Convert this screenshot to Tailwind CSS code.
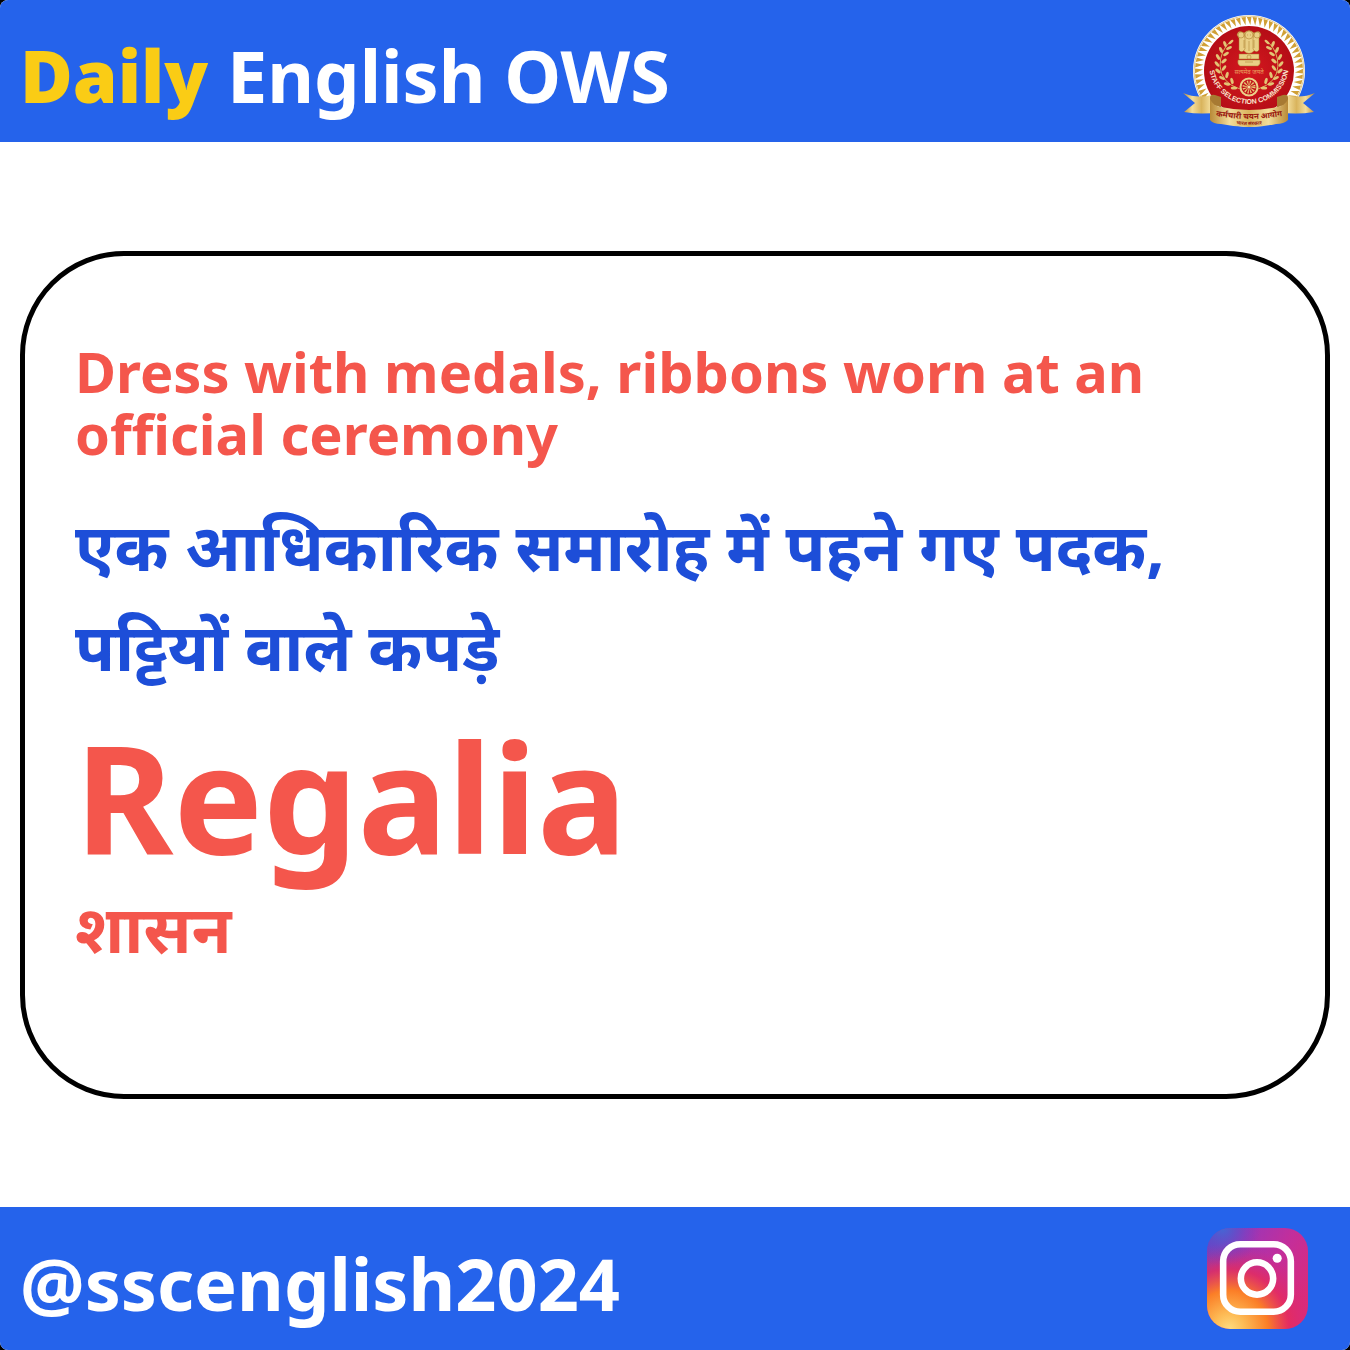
<!DOCTYPE html>
<html lang="en">
<head>
<meta charset="utf-8">
<meta name="viewport" content="width=device-width, initial-scale=1">
<title>Daily English OWS</title>
<script src="https://cdn.jsdelivr.net/npm/@tailwindcss/browser@4"></script>
</head>
<body class="bg-black font-['Noto_Sans',sans-serif] font-bold">
<div class="flex min-h-screen flex-col overflow-hidden rounded-lg bg-white">
<header class="flex h-[142px] items-center justify-between bg-[#2563eb] px-5 text-white">
  <h1 class="pt-2 text-[72px] leading-[96px]"><span class="font-black text-[#facc15]">Daily</span> English OWS</h1>
  <svg class="h-[142px] w-[160px] shrink-0" viewBox="0 0 160 142" role="img" aria-label="Staff Selection Commission">
    <defs>
      <linearGradient id="gold" x1="0" x2="1"><stop offset="0" stop-color="#b98a37"/><stop offset=".25" stop-color="#f3dd9b"/><stop offset=".5" stop-color="#d9b45d"/><stop offset=".75" stop-color="#f3dd9b"/><stop offset="1" stop-color="#b98a37"/></linearGradient>
      <radialGradient id="red"><stop offset="0" stop-color="#d5181f"/><stop offset="1" stop-color="#b50d16"/></radialGradient>
      <path id="ring" d="M39 60V64A40 40 0 0 0 119 64V60"/>
      <path id="motto" d="M41 115Q79 123 117 115"/>
      <path id="state" d="M48 121Q79 129 110 121"/>
      <g id="branch" fill="#e3c474">
        <path d="M70 89Q51 83 50 66Q50 51 60 42" fill="none" stroke="#d9b45d"/>
        <ellipse cx="61" cy="42" rx="3" ry="1.3" transform="rotate(-40 61 42)"/>
        <ellipse cx="55" cy="44" rx="3.2" ry="1.5" transform="rotate(70 55 44)"/><ellipse cx="59" cy="48" rx="3.2" ry="1.5" transform="rotate(-25 59 48)"/>
        <ellipse cx="51" cy="50" rx="3.2" ry="1.5" transform="rotate(65 51 50)"/><ellipse cx="56" cy="54" rx="3.2" ry="1.5" transform="rotate(-30 56 54)"/>
        <ellipse cx="48" cy="57" rx="3.2" ry="1.5" transform="rotate(60 48 57)"/><ellipse cx="54" cy="61" rx="3.2" ry="1.5" transform="rotate(-40 54 61)"/>
        <ellipse cx="47" cy="64" rx="3.2" ry="1.5" transform="rotate(50 47 64)"/><ellipse cx="54" cy="68" rx="3.2" ry="1.5" transform="rotate(-55 54 68)"/>
        <ellipse cx="48" cy="71" rx="3.2" ry="1.5" transform="rotate(40 48 71)"/><ellipse cx="57" cy="75" rx="3.2" ry="1.5" transform="rotate(-75 57 75)"/>
        <ellipse cx="52" cy="78" rx="3.2" ry="1.5" transform="rotate(25 52 78)"/><ellipse cx="62" cy="81" rx="3.2" ry="1.5" transform="rotate(75 62 81)"/>
        <ellipse cx="57" cy="84" rx="3.2" ry="1.5" transform="rotate(12 57 84)"/><ellipse cx="64" cy="88" rx="3.2" ry="1.5"/>
      </g>
    </defs>
    <circle cx="79" cy="71" r="56" fill="#fff"/>
    <circle cx="79" cy="71" r="55" fill="none" stroke="#e3c88a"/>
    <path id="teeth" fill="#d0a036"/>
    <circle cx="79" cy="71" r="45" fill="url(#red)"/>
    <use href="#branch"/><use href="#branch" transform="translate(158 0) scale(-1 1)"/>
    <g fill="#e9cf85" stroke="#a67524" stroke-width=".5">
      <path d="M74 33Q79 28 84 33L85 50Q79 57 73 50Z"/>
      <path d="M74 33Q68 29 67 35L69 38 69 50Q72 54 75 49L75 39Z"/><path d="M84 33Q90 29 91 35L89 38 89 50Q86 54 83 49L83 39Z"/>
      <circle cx="71" cy="35" r="3"/><circle cx="87" cy="35" r="3"/><circle cx="79" cy="35" r="4"/>
      <path d="M69 54H89V59H69ZM68 60H90Q91 64 88 66H70Q67 64 68 60Z"/>
      <path d="M74 40V48M79 41V51M84 40V48M77 35H78M80 35H81M75 62H83" fill="none"/>
      <circle cx="79" cy="57" r="2"/>
    </g>
    <text x="79" y="74" text-anchor="middle" font-size="6" font-weight="400" fill="#e9a25f">सत्यमेव जयते</text>
    <circle cx="79" cy="87" r="8.5" fill="#c1131b" stroke="#ecd28a" stroke-width="2"/>
    <circle cx="79" cy="87" r="4" fill="none" stroke="#e7c873" stroke-width="5" stroke-dasharray="1 1.1"/>
    <circle cx="79" cy="87" r="1.5" fill="#f1dda0"/>
    <path d="M13 93Q27 99 42 95L50 112Q33 115 14 112L25 103Z" fill="url(#gold)"/>
    <path d="M145 93Q131 99 116 95L108 112Q125 115 144 112L133 103Z" fill="url(#gold)"/>
    <path d="M40 98Q40 94 45 95L51 97V108Q45 103 40 107ZM118 98Q118 94 113 95L107 97V108Q113 103 118 107Z" fill="#a77a32"/>
    <path d="M40 99Q43 106 51 107Q79 113 107 107Q115 106 118 99V120Q114 124 106 124Q79 130 51 124Q43 124 40 120Z" fill="url(#gold)"/>
    <text font-family="Liberation Sans, sans-serif" font-size="7" fill="#f8e4ce" text-anchor="middle"><textPath href="#ring" startOffset="50%">STAFF SELECTION COMMISSION</textPath></text>
    <g fill="#99180f" text-anchor="middle"><text font-size="8"><textPath href="#motto" startOffset="50%">कर्मचारी चयन आयोग</textPath></text><text font-size="5"><textPath href="#state" startOffset="50%">भारत सरकार</textPath></text></g>
  </svg>
</header>
<main class="flex flex-1 flex-col justify-center px-5">
  <section class="rounded-[104px] border-[5px] border-black px-[50px] pt-[84px] pb-[118px]">
    <p class="text-[56px] leading-[62px] text-[#f4564c]">Dress with medals, ribbons worn at an official ceremony</p>
    <p lang="hi" class="mt-8 text-[65px] leading-[100px] text-[#1d4ed8]">एक आधिकारिक समारोह में पहने गए पदक, पट्टियों वाले कपड़े</p>
    <h2 class="mt-4 text-[150px] leading-[168px] text-[#f4564c]">Regalia</h2>
    <p lang="hi" class="text-[65px] leading-[96px] text-[#f4564c]">शासन</p>
  </section>
</main>
<footer class="flex h-[143px] items-center justify-between bg-[#2563eb] pr-[42px] pl-5 text-white">
  <p class="pt-2 text-[72px] leading-[96px]">@sscenglish2024</p>
  <svg class="size-[101px] shrink-0" viewBox="0 0 100 100" role="img" aria-label="Instagram">
    <defs>
      <linearGradient id="ig" x1="0" y1="0" x2="1" y2=".6"><stop offset="0" stop-color="#5b46c9"/><stop offset=".3" stop-color="#9b36b7"/><stop offset=".65" stop-color="#c32e9b"/><stop offset="1" stop-color="#d92b7c"/></linearGradient>
      <radialGradient id="sun" cx=".22" cy="1" r=".85"><stop offset="0" stop-color="#ffdc80"/><stop offset=".18" stop-color="#fdbb55"/><stop offset=".45" stop-color="#fb7e27"/><stop offset=".7" stop-color="#e62c5c" stop-opacity=".8"/><stop offset="1" stop-color="#d62976" stop-opacity="0"/></radialGradient>
      <radialGradient id="sky" cx=".15" cy="0" r=".38"><stop offset="0" stop-color="#4368d5"/><stop offset="1" stop-color="#6a3cc4" stop-opacity="0"/></radialGradient>
    </defs>
    <rect width="100" height="100" rx="23" fill="url(#ig)"/><rect width="100" height="100" rx="23" fill="url(#sun)"/><rect width="100" height="100" rx="23" fill="url(#sky)"/>
    <g fill="none" stroke="#fff" stroke-width="6.5"><rect x="16" y="16" width="67" height="67" rx="17"/><circle cx="49.5" cy="50" r="16"/></g>
    <circle cx="69.5" cy="30" r="4.5" fill="#fff"/>
  </svg>
</footer>
</div>
<script>
// Gold saw-tooth border around the emblem's disc.
const at = (r, a) => (79 + r * Math.cos(a)).toFixed(2) + ' ' + (71 + r * Math.sin(a)).toFixed(2);
let d = '';
for (let i = 0; i < 60; i++) {
  const a = i * Math.PI / 30;
  d += 'M' + at(54, a - .04) + 'L' + at(54, a + .045) + 'L' + at(46, a + .03) + 'Z';
}
document.getElementById('teeth').setAttribute('d', d);
</script>
</body>
</html>
